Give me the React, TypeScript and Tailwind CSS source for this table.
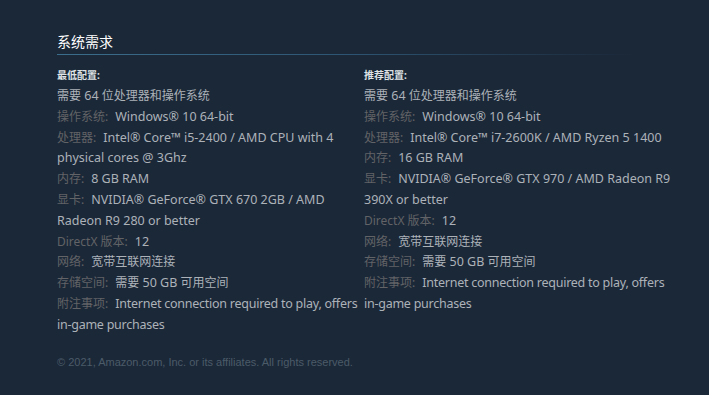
import React from "react";

type Row = { label?: string; value: string; tight?: boolean };

const minRows: Row[] = [
  { value: "需要 64 位处理器和操作系统" },
  { label: "操作系统:", value: "Windows® 10 64-bit" },
  { label: "处理器:", value: "Intel® Core™ i5-2400 / AMD CPU with 4 physical cores @ 3Ghz" },
  { label: "内存:", value: "8 GB RAM" },
  { label: "显卡:", value: "NVIDIA® GeForce® GTX 670 2GB / AMD Radeon R9 280 or better" },
  { label: "DirectX 版本:", value: "12" },
  { label: "网络:", value: "宽带互联网连接" },
  { label: "存储空间:", value: "需要 50 GB 可用空间" },
  { label: "附注事项:", value: "Internet connection required to play, offers in-game purchases", tight: true },
];

const recRows: Row[] = [
  { value: "需要 64 位处理器和操作系统" },
  { label: "操作系统:", value: "Windows® 10 64-bit" },
  { label: "处理器:", value: "Intel® Core™ i7-2600K / AMD Ryzen 5 1400" },
  { label: "内存:", value: "16 GB RAM" },
  { label: "显卡:", value: "NVIDIA® GeForce® GTX 970 / AMD Radeon R9 390X or better" },
  { label: "DirectX 版本:", value: "12" },
  { label: "网络:", value: "宽带互联网连接" },
  { label: "存储空间:", value: "需要 50 GB 可用空间" },
  { label: "附注事项:", value: "Internet connection required to play, offers in-game purchases", tight: true },
];

function Mixed({ text }: { text: string }) {
  const parts = text.split(/([\u3000-\u9fff\uff00-\uffef]+)/);
  return (
    <>
      {parts.map((p, i) =>
        /[\u3000-\u9fff\uff00-\uffef]/.test(p) ? (
          <span key={i} className="text-[12px] leading-[14px]">
            {p}
          </span>
        ) : (
          <React.Fragment key={i}>{p}</React.Fragment>
        )
      )}
    </>
  );
}

function Col({ title, rows }: { title: string; rows: Row[] }) {
  return (
    <div className="w-[307px]">
      <div className="text-[10px] font-bold text-[#dfe3e6] leading-[14px] mb-[4px]">{title}</div>
      <ul>
        {rows.map((r, i) => (
          <li key={i} className="text-[12.5px] leading-[20.8px] text-[#acb2b8]">
            {r.label && (
              <span className="text-[12px] leading-[14px] text-[#626366] mr-[7px]">{r.label}</span>
            )}
            <span className={r.tight ? "tracking-[-0.25px]" : ""}>
              <Mixed text={r.value} />
            </span>
          </li>
        ))}
      </ul>
    </div>
  );
}

export default function App() {
  return (
    <div
      className="w-[709px] h-[395px] bg-[#1b2838] pl-[57px] pt-[33px]"
      style={{ fontFamily: '"Noto Sans", "Noto Sans CJK SC", sans-serif' }}
    >
      <div className="w-[580px]">
        <div className="text-[14px] leading-[18px] text-white pb-[3px]">系统需求</div>
        <div className="h-px bg-gradient-to-r from-[#3b6e8c] via-[#2d5573] to-[#1b2838]" />
      </div>
      <div className="flex mt-[13px]">
        <Col title="最低配置:" rows={minRows} />
        <Col title="推荐配置:" rows={recRows} />
      </div>
      <div
        className="mt-[18px] text-[11px] text-[#4b5b68]"
        style={{ fontFamily: '"Liberation Sans", Arial, sans-serif' }}
      >
        © 2021, Amazon.com, Inc. or its affiliates. All rights reserved.
      </div>
    </div>
  );
}
